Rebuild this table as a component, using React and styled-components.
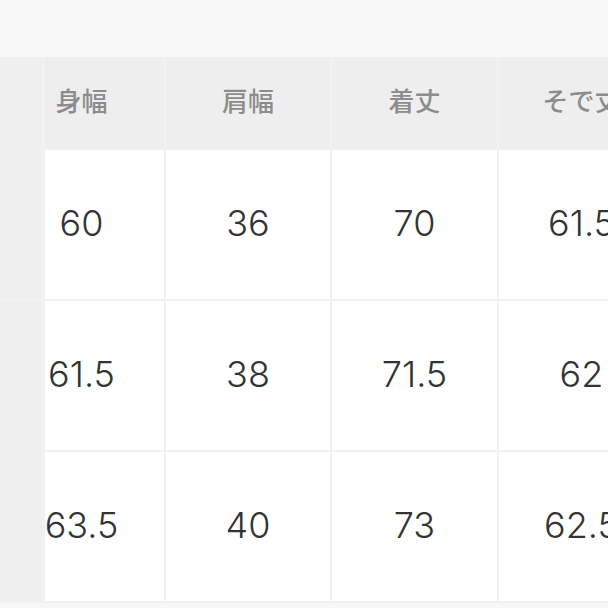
import React from 'react'
import styled, { createGlobalStyle } from 'styled-components';

const Global = createGlobalStyle`
  html, body { margin:0; padding:0; background:#f7f7f7; }
  #root { width:608px; height:608px; overflow:hidden; }
`
const Page = styled.div`
  width:608px;
  height:608px;
  background:#f7f7f7;
  overflow:hidden;
`
const TopBar = styled.div`
  height:57px;
  background:#f8f8f8;
`
const Table = styled.div`
  display:grid;
  grid-template-columns:43px 119px 164px 165px 165px;
  grid-template-rows:91px 149px 149px 149px;
  gap:2px;
  background:#f1f1f1;
  width:max-content;
  padding-bottom:2px;
`
const Side = styled.div`
  background:#efefef;
  border-right:1px solid #f3f3f3;
`
const Head = styled.div`
  display:flex;
  align-items:center;
  justify-content:center;
  padding-right:${p => p.$first ? '46px' : '0'};
  padding-bottom:6px;
  background:#eeeeee;
  color:#8c8c8c;
  font-family:"Noto Sans CJK JP", sans-serif;
  font-weight:500;
  font-size:26px;
  white-space:nowrap;
  overflow:hidden;
`
const Cell = styled.div`
  display:flex;
  align-items:center;
  justify-content:center;
  padding-right:${p => p.$first ? '46px' : '0'};
  padding-bottom:4px;
  background:#ffffff;
  color:#333333;
  font-family:Inter, "Liberation Sans", sans-serif;
  font-weight:300;
  font-size:36px;
  white-space:nowrap;
  overflow:visible;
`

const headers = ['身幅', '肩幅', '着丈', 'そで丈']
const rows = [
  ['60', '36', '70', '61.5'],
  ['61.5', '38', '71.5', '62'],
  ['63.5', '40', '73', '62.5'],
]

const App = () => {
  return (
    <Page>
      <Global />
      <TopBar />
      <Table>
        <Side />
        {headers.map((h, i) => (
          <Head key={h} $first={i === 0}>{h}</Head>
        ))}
        {rows.map((r, ri) => (
          <React.Fragment key={ri}>
            <Side />
            {r.map((v, i) => (
              <Cell key={i} $first={i === 0}>{v}</Cell>
            ))}
          </React.Fragment>
        ))}
      </Table>
    </Page>
  )
}

export default App;
